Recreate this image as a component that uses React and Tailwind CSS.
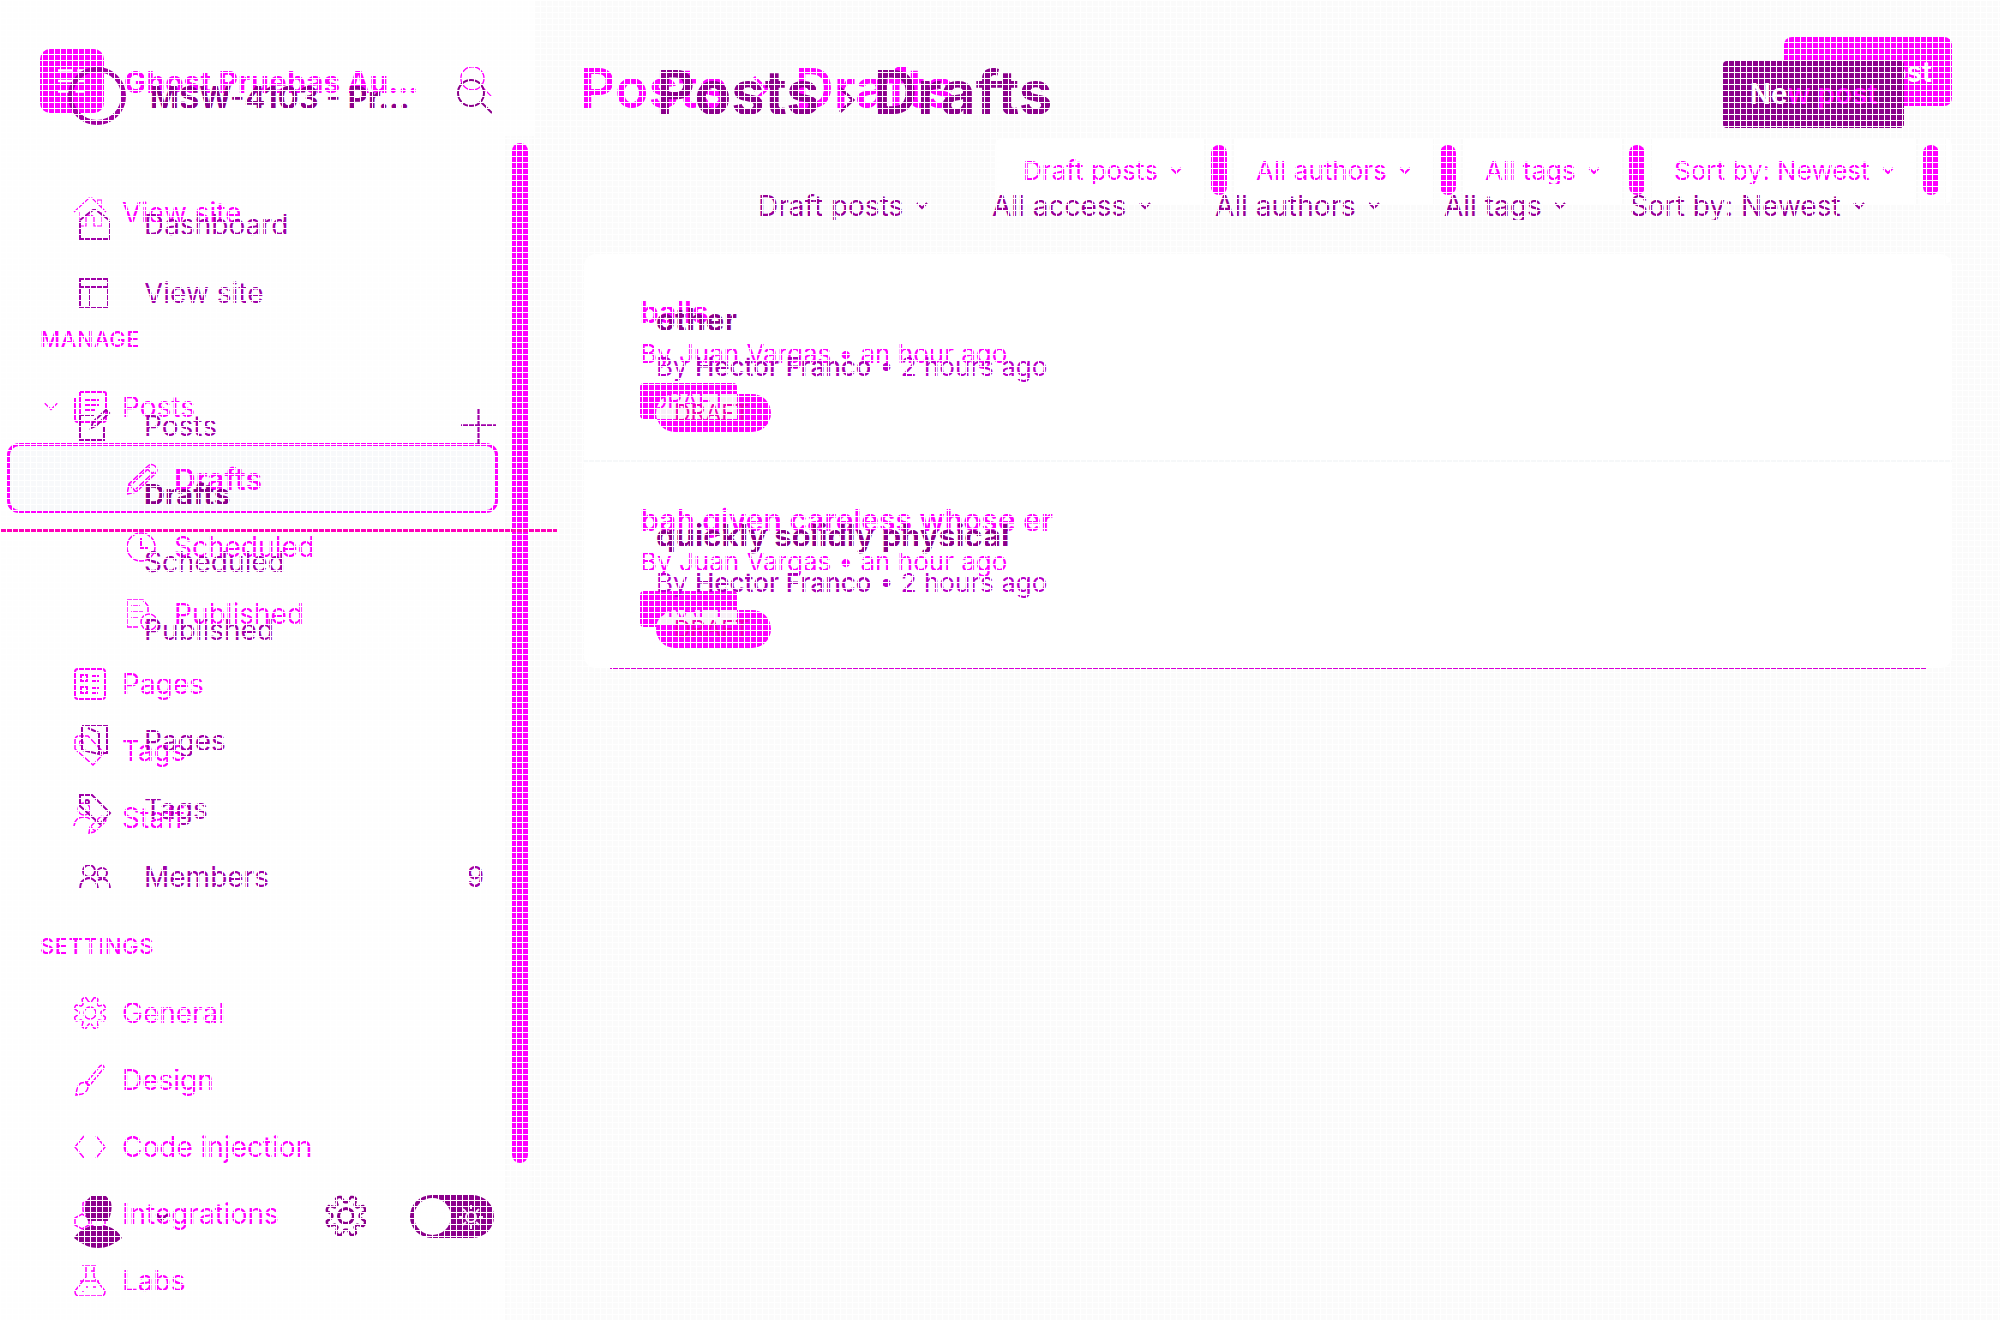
import React from "react";

function Icon({ children, size = "w-8 h-8", box = "0 0 32 32", sw = 2 }) {
  return (
    <svg className={size + " shrink-0 overflow-visible"} viewBox={box} fill="none" stroke="currentColor" strokeWidth={sw} aria-hidden="true">
      {children}
    </svg>
  );
}

// Eight rounded lobes around the centre, with a notch at the top.
const gear =
  "M" +
  Array.from({ length: 96 }, (_, i) => {
    const a = (i / 96) * Math.PI * 2;
    const wave = Math.max(-1, Math.min(1, -1.7 * Math.cos(8 * a)));
    const r = 13.6 + 2.6 * wave;
    return (16 + r * Math.sin(a)).toFixed(1) + " " + (16 - r * Math.cos(a)).toFixed(1);
  }).join("L") +
  "Z";

const icons = {
  home: (
    <Icon sw={1.2}>
      <path d="M0 15 15 1h3l14 14M5 15v14h7v-9q4-4 8 0v9h8V15M23 5V3h5v7" />
    </Icon>
  ),
  posts: (
    <Icon>
      <path d="M6 1h24q2 0 2 2v25q0 3-3 3H4q-3 0-3-3V7M6 1v27q0 3-3 3M11 9h14M11 14h14M11 19h10" />
    </Icon>
  ),
  pencil: (
    <Icon sw={1.5}>
      <path d="M1 31l2-10L22 3q3-3 7 0 4 4 0 8L10 29zM3 21l7 8M6 21 24 4M20 5l8 7M10 26 28 9" />
    </Icon>
  ),
  clock: (
    <Icon sw={1.5}>
      <circle cx="15" cy="16" r="14" />
      <path d="M15 7v10h7" strokeWidth="2" />
    </Icon>
  ),
  published: (
    <Icon sw={1.5}>
      <path d="M13 29H1V2h16l5 6v6M5 8h9M5 14h12M5 20h7" />
      <circle cx="23" cy="24" r="8" />
      <path d="m19 24 3 3 5-6" />
    </Icon>
  ),
  pages: (
    <Icon>
      <rect x="1" y="1" width="30" height="30" rx="3" />
      <path d="M7 7h6v6H7zM7 19h6v6H7zM18 8h7M18 13h7M18 20h7M18 25h6" />
    </Icon>
  ),
  tags: (
    <Icon sw={1.5}>
      <path d="M1 5q0-3 3-4h10l16 17-11 12L1 14z" />
      <circle cx="7" cy="8" r="2" />
    </Icon>
  ),
  staff: (
    <Icon sw={1.5}>
      <circle cx="10" cy="7" r="6" />
      <path d="M0 24q1-9 10-9 4 0 6 2M15 31l1-6 10-10q3-2 5 1t-1 5L20 30zM17 25l4 4" />
    </Icon>
  ),
  gear: (
    <Icon sw={1.5}>
      <path d={gear} />
      <circle cx="16" cy="16" r="6" />
    </Icon>
  ),
  brush: (
    <Icon sw={1.5}>
      <path d="M13 18 26 2q4-2 4 2L16 21M2 31q1-10 5-12 6-2 7 3 0 6-6 8zM11 17l5 5" />
    </Icon>
  ),
  code: (
    <Icon sw={1.5}>
      <path d="M10 5 1 16l9 11M22 5l9 11-9 11" />
    </Icon>
  ),
  modules: (
    <Icon sw={1.5}>
      <path d="m16 1 7 4v8l-7 4-7-4V5zM8 16l7 4v7l-7 4-7-4v-7zM24 16l7 4v7l-7 4-7-4v-7z" />
    </Icon>
  ),
  flask: (
    <Icon sw={1.5}>
      <path d="M8 1h14M12 1v11L1 26q0 5 4 5h22q4 0 4-5L20 12V1M16 6h4M6 16h19" />
      <path d="M12 22h2M19 22h3M8 26h2" />
    </Icon>
  ),
  houseB: (
    <Icon>
      <path d="M1 12v18h29V12M1 11 14 1h3l13 10" />
    </Icon>
  ),
  layoutB: (
    <Icon>
      <path d="M1 2h28v28H1zM1 10h28M11 10v20" />
    </Icon>
  ),
  editB: (
    <Icon>
      <path d="M15 5H1v25h24V16M12 18l2-6L27 0l3 3-13 13z" />
    </Icon>
  ),
  pagesB: (
    <Icon>
      <path d="M3 1h25v27h-6M3 1v24l17 4V8L9 3" />
    </Icon>
  ),
  tagB: (
    <Icon>
      <path d="M1 2h12l18 18-10 11L1 13z" />
      <circle cx="8" cy="9" r="2" />
    </Icon>
  ),
  membersB: (
    <Icon>
      <circle cx="10" cy="10" r="6" />
      <circle cx="23" cy="12" r="5" />
      <path d="M1 28q0-10 9-11 8 1 9 11M19 19q11-4 12 9" />
    </Icon>
  ),
};

function Down({ className = "w-3 h-2", sw = 2 }) {
  return (
    <svg className={className + " shrink-0 pointer-events-none"} viewBox="0 0 12 8" fill="none" stroke="currentColor" strokeWidth={sw} aria-hidden="true">
      <path d="m1 1 5 5 5-5" />
    </svg>
  );
}

function Right({ className }) {
  return (
    <svg className={className} viewBox="0 0 18 28" fill="none" stroke="currentColor" strokeWidth="3" aria-hidden="true">
      <path d="m2 2 13 12L2 26" />
    </svg>
  );
}

function Search({ className, sw }) {
  return (
    <svg className={className} viewBox="0 0 36 36" fill="none" stroke="currentColor" strokeWidth={sw} aria-hidden="true">
      <circle cx="14" cy="15" r="13" />
      <path d="m24 24 11 11" />
    </svg>
  );
}

function NavA({ icon, label }) {
  return (
    <a href="#" className="flex h-[67px] items-center gap-4 pt-[2px] pl-[74px]">
      {icons[icon]}
      {label}
    </a>
  );
}

function SubA({ icon, label }) {
  return (
    <a href="#" className="flex h-[67px] items-center gap-4 pl-[126px]">
      {icons[icon]}
      {label}
    </a>
  );
}

function NavB({ icon, label, extra }) {
  return (
    <a href="#" className="flex h-[68px] items-center pt-[2px] pr-[50px] pl-[79px]">
      <span className="w-[65px] shrink-0">{icon && icons[icon]}</span>
      <span className="grow">{label}</span>
      {extra}
    </a>
  );
}

function FilterA({ label }) {
  return (
    <div className="flex items-center bg-white pl-[22px]">
      <label className="flex items-center gap-3 pr-[22px]">
        <select aria-label={label} className="appearance-none bg-transparent text-[26px] outline-none">
          <option>{label}</option>
        </select>
        <Down />
      </label>
      <div className="flex h-full w-[30px] items-start justify-center border-x-2 border-[#fafafa] bg-[#fdfdfd] pt-[7px]">
        <span className="h-[50px] w-4 rounded-full bg-[#ff00ff]" />
      </div>
    </div>
  );
}

function FilterB({ label }) {
  return (
    <label className="flex items-center gap-3">
      <select aria-label={label} className="appearance-none bg-transparent text-[28px] outline-none">
        <option>{label}</option>
      </select>
      <Down />
    </label>
  );
}

function RowA({ title, last }) {
  return (
    <li className={"border-[#f6f8f9] px-[56px] pt-[41px] pb-[41px] " + (last ? "" : "border-b-2")}>
      <h3 className="text-[30px] leading-[34px] font-semibold">{title}</h3>
      <p className="mt-2 text-[26px] leading-[34px]">By Juan Vargas • an hour ago</p>
      <span className="mt-3 flex h-9 w-[97px] items-center justify-center rounded-sm bg-[#ff00ff] text-[23px] leading-none">
        <span className="relative z-20">DRAFT</span>
      </span>
    </li>
  );
}

function RowB({ title, patch }) {
  return (
    <li className="pb-[87px] text-[#8b008b]">
      <h3 className="text-[31px] leading-[34px] font-bold">{title}</h3>
      <p className="mt-[13px] text-[26px] leading-[34px] text-[#b800c8]">
        By <span className="font-medium text-[#a800b4]">Hector Franco</span> • 2 hours ago
      </p>
      <span className="relative mt-[10px] flex h-[38px] w-[115px] items-center overflow-hidden rounded-full bg-[#ff00ff] pl-[18px] text-[23px] leading-none text-[#f000b4]">
        <span className={"absolute top-0 left-0 z-10 w-[81px] bg-[#f8f0f8] " + patch} />
        <span className="relative z-20">DRAFT</span>
      </span>
    </li>
  );
}

function SiteLayer() {
  return (
    <div className="flex min-h-screen text-[28px] leading-none text-[#ff00ff] [grid-area:1/1]">
      <aside className="flex w-[534px] shrink-0 flex-col bg-[#fefefe]">
        <header className="flex h-[113px] items-end">
          <span className="ml-10 flex h-16 w-16 items-center justify-center rounded-[10px] bg-[#ff00ff] text-white">
            <Icon sw={3} size="w-7 h-8">
              <path d="M0 4h17M22 4h8M0 16h30M0 28h16M20 28h10" />
            </Icon>
          </span>
          <strong className="ml-5 pb-4 text-[30px] font-bold whitespace-nowrap">Ghost Pruebas Au...</strong>
          <button aria-label="Search" className="mr-[42px] mb-4 ml-auto">
            <Search className="h-8 w-8" sw={1.5} />
          </button>
        </header>
        <div className="flex grow">
          <nav className="w-[505px] pt-[65px]">
            <NavA icon="home" label="View site" />
            <h2 className="mt-[82px] mb-[22px] ml-10 text-[22px] leading-[24px] font-medium tracking-wide">MANAGE</h2>
            <a href="#" className="flex h-[67px] items-center pl-[43px]">
              <Down className="mr-[15px] h-[10px] w-4" sw={1} />
              {icons.posts}
              <span className="pl-4">Posts</span>
            </a>
            <a href="#" className="mx-[7px] mt-[3px] flex h-[70px] items-center gap-4 rounded-xl border-[3px] border-[#ff00ff] bg-[#f8f9fb] pt-[2px] pl-[116px] text-[30px] font-semibold">
              {icons.pencil}
              Drafts
            </a>
            <SubA icon="clock" label="Scheduled" />
            <SubA icon="published" label="Published" />
            <div className="h-[2px]" />
            <NavA icon="pages" label="Pages" />
            <NavA icon="tags" label="Tags" />
            <NavA icon="staff" label="Staff" />
            <h2 className="mt-[83px] mb-[19px] ml-10 text-[22px] leading-[26px] font-medium tracking-wide">SETTINGS</h2>
            <NavA icon="gear" label="General" />
            <NavA icon="brush" label="Design" />
            <NavA icon="code" label="Code injection" />
            <NavA icon="modules" label="Integrations" />
            <NavA icon="flask" label="Labs" />
          </nav>
          <div className="mt-[23px] flex grow justify-center border-x-2 border-[#fafafa] bg-[#fcfcfc] pt-[7px]">
            <span className="h-[1020px] w-4 rounded-full bg-[#ff00ff]" />
          </div>
        </div>
      </aside>
      <main className="grow pt-[37px] pr-12 pl-[50px]">
        <header className="flex h-[101px] items-start justify-between">
          <h1 className="-ml-1 flex items-center pt-[18px] text-[55px] leading-[67px] font-semibold">
            Posts
            <Right className="mx-6 h-7 w-[18px]" />
            Drafts
          </h1>
          <button className="h-[69px] w-[168px] rounded-lg bg-[#ff00ff] text-[28px] font-semibold text-white">New post</button>
        </header>
        <div className="flex justify-end">
          <div className="flex h-[66px] overflow-hidden rounded-lg bg-white pr-[6px] pl-[6px]">
            <FilterA label="Draft posts" />
            <FilterA label="All authors" />
            <FilterA label="All tags" />
            <FilterA label="Sort by: Newest" />
          </div>
        </div>
        <ul className="mt-[50px] rounded-xl bg-white">
          <RowA title="balls" />
          <RowA title="bah given careless whose er" last />
        </ul>
        <hr className="mx-[26px] border-[#d800d8]" />
      </main>
    </div>
  );
}

function AdminLayer() {
  return (
    <div className="relative flex min-h-screen text-[28px] leading-none text-[#a000a8] [grid-area:1/1]">
      <aside className="flex w-[534px] shrink-0 flex-col">
        <header className="flex h-[125px] items-end text-[#8b008b]">
          <span className="ml-[68px] h-[58px] w-[58px] rounded-full border-[5px] border-[#a000a0]" />
          <strong className="ml-6 pb-3 text-[31px] font-bold whitespace-nowrap">MSW-4103 - Pr...</strong>
          <button aria-label="Search site" className="mr-[41px] mb-[11px] ml-auto">
            <Search className="h-9 w-9" sw={2} />
          </button>
        </header>
        <nav className="w-[534px] pt-[65px]">
          <NavB icon="houseB" label="Dashboard" />
          <NavB icon="layoutB" label="View site" />
          <div className="h-[65px]" />
          <NavB
            icon="editB"
            label="Posts"
            extra={
              <button aria-label="New post" className="-mr-[12px]">
                <Icon sw={2} size="w-[35px] h-[35px]">
                  <path d="M16 0v32M0 15h32" />
                </Icon>
              </button>
            }
          />
          <div className="text-[29px] font-bold text-[#8b008b]">
            <NavB label="Drafts" />
          </div>
          <NavB label="Scheduled" />
          <NavB label="Published" />
          <div className="h-[43px]" />
          <NavB icon="pagesB" label="Pages" />
          <NavB icon="tagB" label="Tags" />
          <NavB icon="membersB" label="Members" extra={<span>9</span>} />
        </nav>
        <footer className="mt-auto flex h-[125px] items-start pl-[74px] text-[#8b008b]">
          <svg className="h-[53px] w-12" viewBox="0 0 48 53" fill="currentColor" aria-hidden="true">
            <path d="M17 1h15l5 6q2 9-3 19H14Q9 16 12 6zM16 31h17q10 3 15 12-12 10-24 10T0 43q4-7 16-12z" />
          </svg>
          <Down className="mt-[18px] ml-8 h-[9px] w-4" />
          <button aria-label="Settings" className="mt-[1px] ml-[156px]">
            <Icon size="w-10 h-10" sw={2}>
              <path d={gear} />
              <circle cx="16" cy="16" r="6" strokeWidth="2.5" />
            </Icon>
          </button>
          <button role="switch" aria-checked="false" aria-label="Night mode" className="ml-11 flex h-[43px] w-[84px] items-center rounded-full bg-[#8b008b] pl-1">
            <span className="h-[37px] w-[37px] rounded-full bg-white" />
            <svg className="ml-2 h-6 w-6 text-[#f8e8f8]" viewBox="0 0 24 24" fill="none" stroke="currentColor" strokeWidth="2" aria-hidden="true">
              <circle cx="12" cy="12" r="5" />
              <path d="M12 0v4M12 20v4M0 12h4M20 12h4M4 4l3 3M17 17l3 3M20 4l-3 3M7 17l-3 3" />
            </svg>
          </button>
        </footer>
      </aside>
      <main className="grow pt-[61px] pr-24 pl-[122px]">
        <header className="flex h-[128px] items-start justify-between">
          <h1 className="flex items-center text-[60px] leading-[62px] font-bold text-[#8b008b]">
            Posts
            <Right className="mx-[18px] mt-4 h-7 w-[18px]" />
            Drafts
          </h1>
          <button className="h-[67px] w-[181px] rounded-sm bg-[#8b008b] pb-[2px] text-[28px] font-semibold text-[#ff00ff]">
            <span className="text-white">Ne</span>w post
          </button>
        </header>
        <div className="flex h-[34px] items-center justify-end gap-16 pr-[39px] text-[#980098]">
          <FilterB label="Draft posts" />
          <FilterB label="All access" />
          <FilterB label="All authors" />
          <FilterB label="All tags" />
          <FilterB label="Sort by: Newest" />
        </div>
        <ul className="mt-20">
          <RowB title="other" patch="h-[25px]" />
          <RowB title="quickly solidly physical" patch="h-[15px]" />
        </ul>
      </main>
      <span className="absolute top-[529px] left-0 h-[3px] w-[557px] bg-[#ff00b8]" />
    </div>
  );
}

export default function App() {
  return (
    <div className="relative isolate grid min-h-screen bg-[#fbfbfb] font-['Inter',sans-serif]">
      <SiteLayer />
      <AdminLayer />
      <div className="pointer-events-none absolute inset-0 z-30 bg-[linear-gradient(to_right,#fff_1px,transparent_1px),linear-gradient(to_bottom,#fff_1px,transparent_1px)] bg-[size:6px_6px]" />
    </div>
  );
}
